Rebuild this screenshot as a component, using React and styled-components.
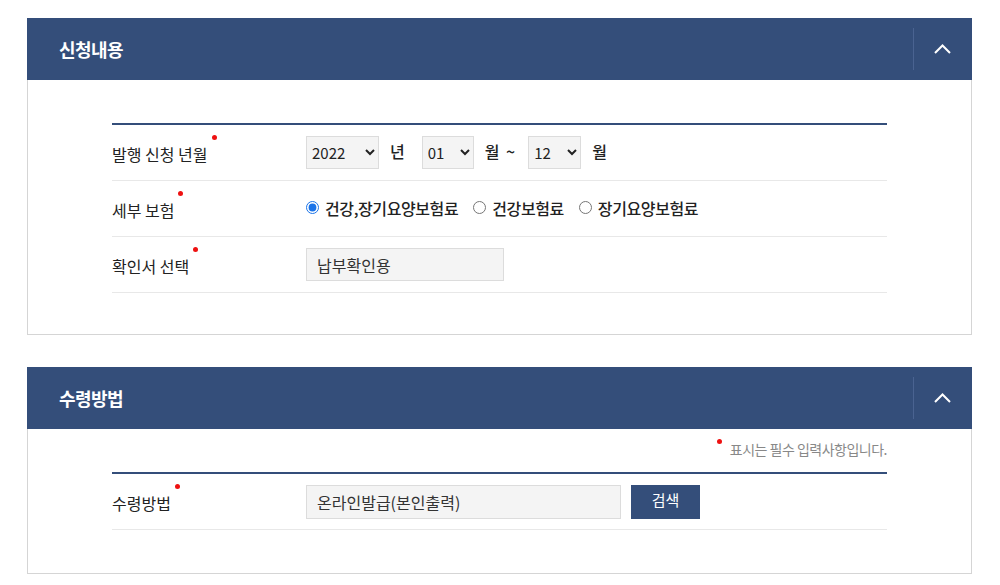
import React from "react";
import styled, { createGlobalStyle } from "styled-components";

const NAVY = "#344e7a";

const Global = createGlobalStyle`
  html, body { margin: 0; padding: 0; background: #fff; }
  body {
    font-family: "Noto Sans CJK KR", "Noto Sans", "Liberation Sans", sans-serif;
    color: #222;
  }
  * { box-sizing: border-box; }
`;

const Page = styled.div`
  width: 1000px;
  padding: 18px 28px 0 27px;
  display: flex;
  flex-direction: column;
  gap: 32px;
`;

const Panel = styled.section`
  width: 945px;
  display: flex;
  flex-direction: column;
`;

const PanelHeader = styled.header`
  height: 62px;
  background: ${NAVY};
  display: flex;
  align-items: center;
  padding-left: 32px;
`;

const PanelTitle = styled.h2`
  flex: 1;
  margin: 0;
  color: #fff;
  font-size: 18px;
  font-weight: 700;
  letter-spacing: -0.6px;
  line-height: 1;
`;

const ToggleButton = styled.button`
  width: 59px;
  height: 42px;
  border: 0;
  border-left: 1px solid #4a6391;
  background: transparent;
  display: flex;
  align-items: center;
  justify-content: center;
  padding: 0 2px 0 0;
  cursor: pointer;
`;

const PanelBody = styled.div`
  border: 1px solid #d5d5d5;
  border-top: 0;
  padding: ${(p) => (p.$withNote ? "10px 84px 43px" : "43px 84px 41px")};
`;

const Note = styled.p`
  margin: 0 0 13px;
  height: 20px;
  display: flex;
  justify-content: flex-end;
  align-items: center;
  font-size: 14px;
  letter-spacing: -0.5px;
  color: #888;
`;

const NoteDot = styled.span`
  width: 5px;
  height: 5px;
  border-radius: 50%;
  background: #ee1111;
  margin: 0 8px 0 0;
  align-self: flex-start;
`;

const Table = styled.div`
  border-top: 2px solid ${NAVY};
  display: flex;
  flex-direction: column;
`;

const Row = styled.div`
  display: grid;
  grid-template-columns: 194px 1fr;
  align-items: center;
  height: 56px;
  border-bottom: 1px solid #e8e8e8;
`;

const Label = styled.div`
  font-size: 16px;
  color: #222;
  line-height: 20px;
  padding-top: 2px;
`;

const LabelText = styled.span`
  position: relative;
  &::after {
    content: "";
    position: absolute;
    right: -9px;
    top: -7px;
    width: 5px;
    height: 5px;
    border-radius: 50%;
    background: #ee1111;
  }
`;

const Field = styled.div`
  display: flex;
  align-items: center;
  gap: ${(p) => p.$gap ?? 10}px;
  font-size: 15px;
`;

const Select = styled.select`
  width: ${(p) => p.$w}px;
  height: 33px;
  background: #f4f4f4;
  border: 1px solid #dcdcdc;
  border-radius: 0;
  font-family: "Noto Sans CJK KR", "Noto Sans", sans-serif;
  font-size: 15px;
  color: #222;
  padding: 0 0 0 1px;
  outline: none;
`;

const Unit = styled.span`
  font-size: 16px;
  font-weight: 500;
  color: #222;
  word-spacing: 3px;
  margin: 0 ${(p) => p.$right ?? 10}px 0 11px;
  padding-bottom: 4px;
`;

const RadioGroup = styled.div`
  display: flex;
  align-items: center;
  padding-bottom: 2px;
`;

const RadioLabel = styled.label`
  display: flex;
  align-items: center;
  gap: 6px;
  font-size: 16px;
  font-weight: 500;
  color: #222;
  margin-right: 15px;
  letter-spacing: -0.4px;
`;

const Radio = styled.input.attrs({ type: "radio" })`
  margin: 0;
  width: 13px;
  height: 13px;
  accent-color: #1a73e8;
`;

const TextBox = styled.input`
  width: ${(p) => p.$w}px;
  height: ${(p) => p.$h || 33}px;
  background: #f4f4f4;
  border: 1px solid #dcdcdc;
  font-family: "Noto Sans CJK KR", "Noto Sans", sans-serif;
  font-size: 16px;
  color: #333;
  padding: 0 10px;
  outline: none;
`;

const SearchButton = styled.button`
  width: 69px;
  height: 34px;
  background: ${NAVY};
  border: 0;
  color: #fff;
  font-family: "Noto Sans CJK KR", "Noto Sans", sans-serif;
  font-size: 15px;
  cursor: pointer;
  padding: 0 0 4px;
`;

const Chevron = () => (
  <svg width="17" height="10" viewBox="0 0 17 10" fill="none">
    <path d="M1 9 L8.5 1.5 L16 9" stroke="#fff" strokeWidth="2" />
  </svg>
);

export default function App() {
  return (
    <>
      <Global />
      <Page>
        <Panel>
          <PanelHeader>
            <PanelTitle>신청내용</PanelTitle>
            <ToggleButton aria-label="접기">
              <Chevron />
            </ToggleButton>
          </PanelHeader>
          <PanelBody>
            <Table>
              <Row>
                <Label>
                  <LabelText>발행 신청 년월</LabelText>
                </Label>
                <Field $gap={0}>
                  <Select $w={73} defaultValue="2022">
                    <option>2021</option>
                    <option>2022</option>
                  </Select>
                  <Unit $right={17}>년</Unit>
                  <Select $w={52} defaultValue="01">
                    <option>01</option>
                    <option>02</option>
                  </Select>
                  <Unit $right={13}>월 ~</Unit>
                  <Select $w={53} defaultValue="12">
                    <option>11</option>
                    <option>12</option>
                  </Select>
                  <Unit>월</Unit>
                </Field>
              </Row>
              <Row>
                <Label>
                  <LabelText>세부 보험</LabelText>
                </Label>
                <RadioGroup>
                  <RadioLabel>
                    <Radio name="ins" defaultChecked />
                    건강,장기요양보험료
                  </RadioLabel>
                  <RadioLabel>
                    <Radio name="ins" />
                    건강보험료
                  </RadioLabel>
                  <RadioLabel>
                    <Radio name="ins" />
                    장기요양보험료
                  </RadioLabel>
                </RadioGroup>
              </Row>
              <Row>
                <Label>
                  <LabelText>확인서 선택</LabelText>
                </Label>
                <Field>
                  <TextBox $w={198} readOnly defaultValue="납부확인용" />
                </Field>
              </Row>
            </Table>
          </PanelBody>
        </Panel>

        <Panel>
          <PanelHeader>
            <PanelTitle>수령방법</PanelTitle>
            <ToggleButton aria-label="접기">
              <Chevron />
            </ToggleButton>
          </PanelHeader>
          <PanelBody $withNote>
            <Note>
              <NoteDot />
              표시는 필수 입력사항입니다.
            </Note>
            <Table>
              <Row>
                <Label>
                  <LabelText>수령방법</LabelText>
                </Label>
                <Field>
                  <TextBox $w={315} $h={34} readOnly defaultValue="온라인발급(본인출력)" />
                  <SearchButton>검색</SearchButton>
                </Field>
              </Row>
            </Table>
          </PanelBody>
        </Panel>
      </Page>
    </>
  );
}
